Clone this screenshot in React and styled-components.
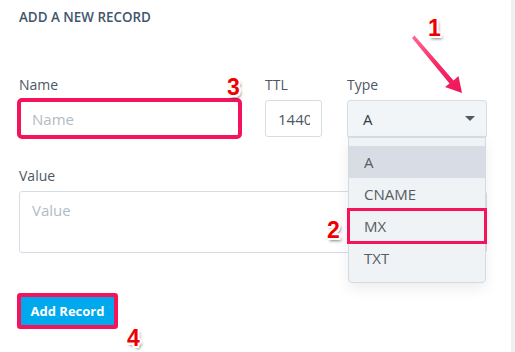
import React from 'react';
import styled, { createGlobalStyle } from 'styled-components';

const GlobalStyle = createGlobalStyle`
  html, body {
    margin: 0;
    padding: 0;
    background: #eef0f2;
  }
  * { box-sizing: border-box; }
`;

const Panel = styled.div`
  position: relative;
  width: 511px;
  height: 352px;
  background: #fff;
  padding: 8px 0 0 19px;
  font-family: "Open Sans", "Noto Sans", sans-serif;
  overflow: hidden;
`;

const Title = styled.h3`
  margin: 0 0 49px;
  font-size: 13.4px;
  line-height: 18px;
  font-weight: 600;
  color: #3f566c;
  text-transform: uppercase;
`;

const Row = styled.div`
  display: flex;
  gap: 25px;
  width: 468px;
  margin-bottom: ${p => p.$mb || 0}px;
`;

const Field = styled.div`
  position: relative;
  width: ${p => p.$w}px;
  display: flex;
  flex-direction: column;
`;

const Label = styled.label`
  font-size: 14px;
  line-height: 20px;
  color: #4d5863;
  margin-bottom: 5px;
`;

const Input = styled.input`
  width: 100%;
  height: 37px;
  border: 1px solid #d5dee4;
  border-radius: 3px;
  background: #fff;
  font-family: inherit;
  font-size: 15px;
  color: #4d5863;
  padding: 0 11px 0 12px;
  outline: ${p => (p.$marked ? '4px solid #f5145c' : 'none')};
  outline-offset: -2px;
  &::placeholder { color: #b3bbc3; }
`;

const TextArea = styled.textarea`
  width: 100%;
  height: 62px;
  border: 1px solid #d5dee4;
  border-radius: 3px;
  font-family: inherit;
  font-size: 15px;
  line-height: 20px;
  padding: 8px 12px;
  resize: none;
  outline: none;
  &::placeholder { color: #b3bbc3; }
`;

const Select = styled.div`
  position: relative;
  height: 37px;
  border: 1px solid #d5dee4;
  border-radius: 3px 3px 0 0;
  background: #f2f5f7;
  display: flex;
  align-items: center;
  justify-content: space-between;
  padding: 0 11px 0 15px;
  font-size: 15px;
  color: #333a40;
`;

const Caret = styled.span`
  width: 0;
  height: 0;
  border-left: 5px solid transparent;
  border-right: 5px solid transparent;
  border-top: 5px solid #4e5b66;
`;

const Menu = styled.ul`
  position: absolute;
  top: 36px;
  left: 0;
  right: 0;
  margin: 0;
  padding: 8px 0;
  list-style: none;
  background: #f0f3f5;
  border: 1px solid #d3dbe1;
  border-radius: 0 0 4px 4px;
  box-shadow: 0 6px 14px rgba(0, 0, 0, 0.07);
  z-index: 2;
`;

const Item = styled.li`
  position: relative;
  height: 32px;
  line-height: 32px;
  padding-left: 15px;
  font-size: 15px;
  color: #555c63;
  background: ${p => (p.$active ? '#d8dde5' : 'transparent')};
  outline: ${p => (p.$marked ? '3px solid #f5145c' : 'none')};
  outline-offset: -1px;
`;

const Button = styled.button`
  margin-left: 2px;
  width: 93px;
  height: 28px;
  border: none;
  border-radius: 1px;
  background: #00a9ee;
  color: #fff;
  font-family: inherit;
  font-size: 13px;
  font-weight: 700;
  padding: 0;
  box-shadow: 0 0 0 1px #f5145c, 0 0 0 4px #f5145c;
`;

const Step = styled.span`
  position: absolute;
  left: ${p => p.$x}px;
  top: ${p => p.$y}px;
  font-family: "Liberation Sans", Arial, sans-serif;
  font-weight: 700;
  font-size: 23px;
  line-height: 22px;
  color: #ee0000;
  text-shadow:
    -1.5px -1.5px 0 #fff, 1.5px -1.5px 0 #fff, -1.5px 1.5px 0 #fff, 1.5px 1.5px 0 #fff,
    0 -2px 0 #fff, 0 2px 0 #fff, -2px 0 0 #fff, 2px 0 0 #fff,
    2px 3px 3px rgba(0, 0, 0, 0.5);
  z-index: 3;
`;

const Arrow = styled.svg`
  position: absolute;
  left: 400px;
  top: 20px;
  z-index: 3;
`;

const App = () => {
  return (
    <>
      <GlobalStyle />
      <Panel>
        <Title>Add a new record</Title>
        <Row $mb={29}>
          <Field $w={221}>
            <Label>Name</Label>
            <Input placeholder="Name" $marked />
          </Field>
          <Field $w={57}>
            <Label>TTL</Label>
            <Input defaultValue="1440" readOnly />
          </Field>
          <Field $w={140}>
            <Label>Type</Label>
            <Select>
              A
              <Caret />
              <Menu>
                <Item $active>A</Item>
                <Item>CNAME</Item>
                <Item $marked>MX</Item>
                <Item>TXT</Item>
              </Menu>
            </Select>
          </Field>
        </Row>
        <Row $mb={44}>
          <Field $w={468}>
            <Label>Value</Label>
            <TextArea placeholder="Value" />
          </Field>
        </Row>
        <Button>Add Record</Button>

        <Arrow width="70" height="80" viewBox="0 0 70 80">
          <defs>
            <linearGradient id="ag" x1="0" y1="0" x2="1" y2="1">
              <stop offset="0" stopColor="#ff6a94" />
              <stop offset="0.5" stopColor="#f52a66" />
              <stop offset="1" stopColor="#f0145a" />
            </linearGradient>
          </defs>
          <polygon
            points="12,18 14.5,15.5 53.5,60.5 58.5,56 62,73 45,67 49.5,63.5"
            fill="url(#ag)"
          />
        </Arrow>
        <Step $x={428} $y={17}>1</Step>
        <Step $x={327} $y={219}>2</Step>
        <Step $x={227} $y={76}>3</Step>
        <Step $x={127} $y={327}>4</Step>
      </Panel>
    </>
  );
};

export default App;
